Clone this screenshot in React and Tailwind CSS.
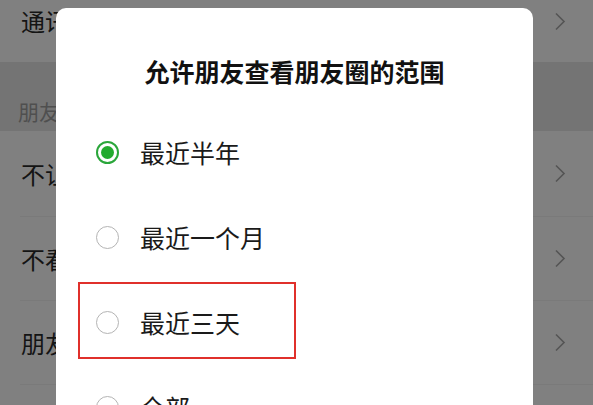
import React from "react";

const font = { fontFamily: '"Noto Sans CJK SC", "Noto Sans", sans-serif' };

function Chevron() {
  return (
    <svg width="12" height="19" viewBox="0 0 12 19" className="shrink-0">
      <polyline points="2,1.5 10,9.5 2,17.5" fill="none" stroke="#545454" strokeWidth="1.6" />
    </svg>
  );
}

function BgRow({ label, className = "" }) {
  return (
    <div className={`flex items-center justify-between pl-[21px] pr-[27px] bg-[#808080] ${className}`}>
      <span className="text-[24px] text-[#141414] leading-none">{label}</span>
      <Chevron />
    </div>
  );
}

function Radio({ checked }) {
  if (checked) {
    return (
      <div className="w-[23px] h-[23px] rounded-full border-2 border-[#2aa63a] flex items-center justify-center shrink-0">
        <div className="w-[13px] h-[13px] rounded-full bg-[#22aa2e]" />
      </div>
    );
  }
  return <div className="w-[23px] h-[23px] rounded-full border-[1.5px] border-[#b4b4b4] shrink-0" />;
}

function Option({ label, checked, marked }) {
  return (
    <div className="relative h-[85px] flex items-center pl-[40px] gap-[21px]">
      <Radio checked={checked} />
      <span className="text-[25px] text-[#1a1a1a] leading-none">{label}</span>
      {marked && (
        <div className="absolute left-[22px] top-[2px] w-[218px] h-[77px] border-2 border-[#e0302b]" />
      )}
    </div>
  );
}

export default function App() {
  const options = [
    { label: "最近半年", checked: true },
    { label: "最近一个月" },
    { label: "最近三天", marked: true },
    { label: "全部" },
  ];

  return (
    <div className="relative w-[593px] h-[405px] overflow-hidden bg-[#808080]" style={font}>
      {/* dimmed settings page behind the dialog */}
      <div className="flex flex-col">
        <BgRow label="通讯录权限" className="h-[82px] -mt-[20px]" />
        <div className="h-[69px] bg-[#747474] flex items-end pl-[18px] pb-[9px]">
          <span className="text-[21px] text-[#4f4f4f] leading-none">朋友圈和状态</span>
        </div>
        <BgRow label="不让他看我" className="h-[85px]" />
        <div className="h-px bg-[#7a7a7a] ml-[20px]" />
        <BgRow label="不看他" className="h-[83px]" />
        <div className="h-px bg-[#7a7a7a] ml-[20px]" />
        <BgRow label="朋友圈范围" className="h-[83px]" />
        <div className="h-px bg-[#7a7a7a] ml-[20px]" />
        <BgRow label="更多" className="h-[84px]" />
      </div>

      {/* dialog */}
      <div className="absolute left-[56px] top-[8px] w-[477px] h-[420px] bg-white rounded-[10px]">
        <div className="pt-[46px] h-[102px] text-center">
          <h2 className="text-[25px] font-bold text-[#111] leading-[34px]">允许朋友查看朋友圈的范围</h2>
        </div>
        <div className="flex flex-col">
          {options.map((o) => (
            <Option key={o.label} {...o} />
          ))}
        </div>
      </div>
    </div>
  );
}
